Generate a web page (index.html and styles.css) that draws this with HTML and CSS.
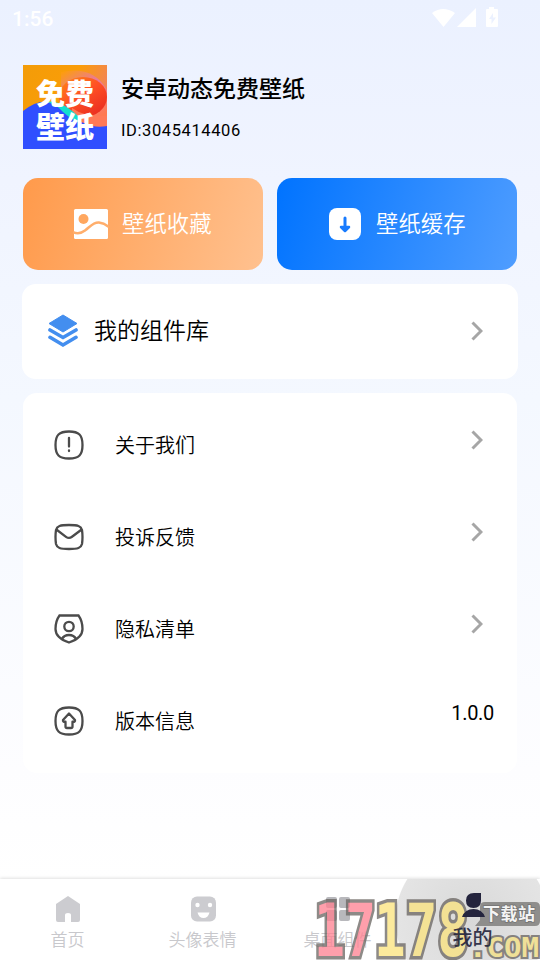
FILE: index.html
```html
<!DOCTYPE html>
<html lang="zh-CN">
<head>
<meta charset="utf-8">
<meta name="viewport" content="width=device-width, initial-scale=1">
<title>我的</title>
<link rel="stylesheet" href="styles.css">
</head>
<body>
<div class="app">
  <header class="status">
    <span class="clock">1:56</span>
    <svg class="signals" width="66" height="22" viewBox="0 0 66 22" fill="#fff">
      <path d="M0 5Q11-3 23 5L11.500 19Z"/>
      <path d="M44 0V19H25Z"/>
      <path fill-rule="evenodd" d="M57 -1H62V1H65Q66 1 66 2V18Q66 19 65 19H55Q54 19 54 18V2Q54 1 55 1H57ZM61 5L57 11H59.500V16L64 9.500H61Z"/>
    </svg>
  </header>

  <section class="profile">
    <div class="avatar">
      <svg class="avatar-art" width="84" height="84" viewBox="0 0 84 84">
        <defs>
          <linearGradient id="warm" x1="0" y1="0" x2="1" y2=".5"><stop offset="0" stop-color="#f39c08"/><stop offset=".55" stop-color="#fa9d08"/><stop offset="1" stop-color="#f07b70"/></linearGradient>
          <linearGradient id="ball" x1="0" y1="0" x2=".8" y2="1"><stop offset="0" stop-color="#ff8a12"/><stop offset=".5" stop-color="#ff5024"/><stop offset="1" stop-color="#e92c20"/></linearGradient>
          <linearGradient id="pink" x1="0" y1="0" x2=".5" y2="1"><stop offset="0" stop-color="#ffa000"/><stop offset=".45" stop-color="#e878a0"/><stop offset="1" stop-color="#ff7950"/></linearGradient>
        </defs>
        <rect width="84" height="84" fill="url(#warm)"/>
        <path d="M38 7Q70 0 84 25V62Q60 64 38 43Z" fill="url(#pink)"/>
        <ellipse cx="60" cy="32" rx="24" ry="20" fill="url(#ball)"/>
        <path d="M0 46Q17 32 33 39Q53 62 84 61V84H0Z" fill="#304fff"/>
        <path d="M49 43Q61 52 84 51V61Q63 65 49 47Z" fill="#ff7957"/>
        <path d="M22 37Q38 34 57 53L58 59Q44 52 36 43Q31 38 22 37Z" fill="#15dfce"/>
      </svg>
      <span class="avatar-text">免费<br>壁纸</span>
    </div>
    <div class="who">
      <h1>安卓动态免费壁纸</h1>
      <p>ID:3045414406</p>
    </div>
  </section>

  <section class="tiles">
    <div class="tile fav">
      <svg width="36" height="32" viewBox="0 0 36 32"><rect x="1" y="1" width="34" height="30" rx="1.500" fill="#fff"/><circle cx="10.500" cy="11" r="5" fill="#ffa75f"/><path d="M0 24Q6 27 12 22.500C17 19 20 14 26 14.500Q31 15 36 19" fill="none" stroke="#ffae6c" stroke-width="2.500"/></svg>
      <span>壁纸收藏</span>
    </div>
    <div class="tile cache">
      <svg width="32" height="34" viewBox="0 0 32 34"><rect y="1" width="32" height="32" rx="8" fill="#fff"/><path d="M16 11V20" stroke="#187bfe" stroke-width="3" stroke-linecap="round"/><path d="M12 20H20L16 24Z" fill="#187bfe" stroke="#187bfe" stroke-width="2.500" stroke-linejoin="round"/></svg>
      <span>壁纸缓存</span>
    </div>
  </section>

  <section class="card library">
    <svg width="30" height="34" viewBox="0 0 30 34"><path d="M15 1L29 9.500L15 18L1 9.500Z" fill="#438eef" stroke="#438eef" stroke-linejoin="round"/><path d="M2 16L15 23.500L28 16M2 23.300L15 31L28 23.300" fill="none" stroke="#438eef" stroke-width="3.600" stroke-linejoin="miter" stroke-linecap="round"/></svg>
    <span class="label">我的组件库</span>
    <svg class="chevron" width="12" height="20" viewBox="0 0 12 20"><path d="M1.500 1.500L10 10L1.500 18.500"/></svg>
  </section>

  <section class="card menu">
    <div class="row">
      <svg class="line-icon" width="30" height="30" viewBox="0 0 30 30"><path d="M15 1.500C25 1.500 28.500 5 28.500 15S25 28.500 15 28.500S1.500 25 1.500 15S5 1.500 15 1.500Z"/><path d="M15 8V16.500M15 20.500V21"/></svg>
      <span class="label">关于我们</span>
      <svg class="chevron" width="12" height="20" viewBox="0 0 12 20"><path d="M1.500 1.500L10 10L1.500 18.500"/></svg>
    </div>
    <div class="row">
      <svg class="line-icon" width="30" height="30" viewBox="0 0 30 30"><path d="M15 3C24 3 27 4 28 8Q29 15 28 22C27 26 24 27 15 27S3 26 2 22Q1 15 2 8C3 4 6 3 15 3Z"/><path d="M3 8L12 14.800Q15 17 18 14.800L27 8"/></svg>
      <span class="label">投诉反馈</span>
      <svg class="chevron" width="12" height="20" viewBox="0 0 12 20"><path d="M1.500 1.500L10 10L1.500 18.500"/></svg>
    </div>
    <div class="row">
      <svg class="line-icon" width="30" height="30" viewBox="0 0 30 30"><path d="M5.500 1.500H24.500Q28.500 7 28.500 15C28.500 23 21 26.500 15 28.500C9 26.500 1.500 23 1.500 15Q1.500 7 5.500 1.500Z"/><circle cx="15" cy="12.500" r="4.700"/><path d="M8 25Q10 21 15 21T22 25"/></svg>
      <span class="label">隐私清单</span>
      <svg class="chevron" width="12" height="20" viewBox="0 0 12 20"><path d="M1.500 1.500L10 10L1.500 18.500"/></svg>
    </div>
    <div class="row">
      <svg class="line-icon" width="30" height="30" viewBox="0 0 30 30"><path d="M15 1.500C25 1.500 28.500 5 28.500 15S25 28.500 15 28.500S1.500 25 1.500 15S5 1.500 15 1.500Z"/><path d="M15 7.500L21 14Q21.500 16 18.500 15.700V20.500Q18.500 22 17 22H13Q11.500 22 11.500 20.500V15.700Q8.500 16 9 14Z" stroke-linejoin="round"/></svg>
      <span class="label">版本信息</span>
      <span class="version">1.0.0</span>
    </div>
  </section>

  <nav class="tabs">
    <div class="tab">
      <svg width="28" height="28" viewBox="0 0 28 28"><path fill="#ccccd0" d="M14 1L26 9V25Q26 27 24 27H17V20Q17 18 14 18T11 20V27H4Q2 27 2 25V9Z"/></svg>
      <span>首页</span>
    </div>
    <div class="tab">
      <svg width="28" height="28" viewBox="0 0 28 28"><rect x="2" y="1.500" width="25" height="25" rx="6" fill="#ccccd0"/><g fill="#fff"><circle cx="8.500" cy="10" r="2.200"/><circle cx="21" cy="10" r="2.200"/><path d="M8.500 17.500H20.500Q19 23 14.500 23T8.500 17.500Z"/></g></svg>
      <span>头像表情</span>
    </div>
    <div class="tab">
      <svg width="28" height="28" viewBox="0 0 28 28" fill="#b8b8bc"><rect x="2" y="2" width="11" height="11" rx="2"/><rect x="15" y="2" width="11" height="11" rx="2"/><rect x="2" y="15" width="11" height="11" rx="2"/><rect x="15" y="15" width="11" height="11" rx="2"/></svg>
      <span>桌面组件</span>
    </div>
    <div class="tab active">
      <svg width="28" height="28" viewBox="0 0 28 28"><path fill="#24243d" d="M22 -2V5.500Q22 13 14.500 13Q7 13 7 5.500Q7 -2 15 -2ZM3 22Q6 14 14.500 14T26 22Z"/></svg>
      <span>我的</span>
    </div>
    <svg class="watermark" width="240" height="81" viewBox="300 879 240 81">
      <g font-family="DejaVu Sans Mono" font-weight="bold" font-size="73" stroke="#68635f" stroke-width="7" stroke-linejoin="miter" paint-order="stroke" opacity=".75">
        <text x="314" y="956" textLength="62" lengthAdjust="spacingAndGlyphs" fill="#ff8090">17</text>
        <text x="374" y="956" textLength="95" lengthAdjust="spacingAndGlyphs" fill="#fbe37c">178</text>
      </g>
      <text x="469" y="957" font-family="DejaVu Sans Mono" font-weight="bold" font-size="27" textLength="70" lengthAdjust="spacingAndGlyphs" fill="#f4e080" stroke="#68635f" stroke-width="4" paint-order="stroke" opacity=".75">.COM</text>
      <path d="M485 902H535Q540 902 540 907V921Q540 926 535 926H475L480 920V907Q480 902 485 902Z" fill="#807f7d" opacity=".85"/>
      <text x="483" y="920" font-family="Noto Sans CJK SC" font-weight="700" font-size="17" textLength="52" fill="#f4f4f4" stroke="#737373" stroke-width="1.500" paint-order="stroke">下载站</text>
    </svg>
  </nav>
</div>
</body>
</html>
```
FILE: styles.css
```css
* { box-sizing: border-box; }
body {
  margin: 0;
  font-family: Roboto, "Noto Sans CJK SC", sans-serif;
  color: #000;
}
.app {
  width: 540px;
  height: 960px;
  overflow: hidden;
  display: flex;
  flex-direction: column;
  background: linear-gradient(#ebf1ff 0, #f0f4ff 180px, #f4f8ff 400px, #fdfdff 770px, #fff 880px);
}
.status {
  height: 65px;
  padding: 8px 41px 0 12px;
  display: flex;
  justify-content: space-between;
  align-items: flex-start;
  color: #fff;
}
.clock { font-size: 21px; line-height: 22px; font-weight: 500; }
.signals { overflow: visible; margin-right: 1px; }
.profile {
  height: 113px;
  padding-left: 23px;
  display: flex;
  gap: 14px;
}
.avatar { width: 84px; height: 84px; display: grid; overflow: hidden; }
.avatar-art, .avatar-text { grid-area: 1 / 1; }
.avatar-text {
  z-index: 1;
  color: #fff;
  text-align: center;
  padding-top: 11px;
  font: 900 29px/33px "Noto Sans CJK SC", sans-serif;
}
.who h1 { margin: 8px 0 0; font-size: 23px; line-height: 34px; font-weight: 500; }
.who p { margin: 14px 0 0; font-size: 16.5px; line-height: 20px; letter-spacing: .6px; }
.tiles { padding: 0 23px; display: flex; gap: 14px; height: 92px; }
.tile {
  flex: 0 0 240px;
  border-radius: 15px;
  display: flex;
  align-items: center;
  color: #fff;
  font-size: 22.4px;
  font-weight: 350;
}
.tile span { line-height: 34px; }
.fav { padding-left: 50px; gap: 13px; background: linear-gradient(107deg, #ff9a4b, #ffc18f); }
.cache { padding-left: 52px; gap: 15px; background: linear-gradient(107deg, #0073ff, #4f9dff); }
.card { background: #fff; border-radius: 14px; }
.library {
  height: 95px;
  margin: 14px 22px 0;
  padding: 0 35px 0 26px;
  display: flex;
  align-items: center;
}
.library svg { margin-top: -1px; }
.label { flex: 1; font-weight: 350; }
.library .label { margin-left: 16px; font-size: 23px; line-height: 34px; }
.chevron { fill: none; stroke: #a6a6a6; stroke-width: 3; }
.menu { margin: 14px 23px 0; height: 380px; padding: 6px 23px 0 30.5px; }
.row { height: 92px; display: flex; align-items: center; }
.row .label { margin-left: 31.5px; padding-top: 2px; font-size: 20px; line-height: 30px; }
.row .chevron { margin: -11px 11px 0 0; }
.line-icon { fill: none; stroke: #4b4b4b; stroke-width: 2.3; stroke-linecap: round; }
.version { font-size: 20px; line-height: 24px; margin-top: -16px; letter-spacing: -.3px; }
.tabs {
  position: relative;
  margin-top: auto;
  height: 81px;
  display: grid;
  grid-template-columns: repeat(4, 1fr);
  background: radial-gradient(circle at 472px 41px, #d9d9d9 0, #e4e4e4 76px, transparent 77px), #fff;
  box-shadow: 0 -1px 3px rgba(0, 0, 0, .12);
}
.tab {
  display: flex;
  flex-direction: column;
  align-items: center;
  padding-top: 16px;
  color: #c8c8cc;
  font-size: 17px;
  font-weight: 350;
  line-height: 24px;
}
.tab span { margin-top: 5px; }
.tab svg { overflow: visible; }
.active { position: relative; z-index: 1; color: #24243d; font-size: 20px; font-weight: 500; }
.active span { margin-top: 3px; opacity: .9; }
.watermark { position: absolute; right: 0; bottom: 0; }
```
